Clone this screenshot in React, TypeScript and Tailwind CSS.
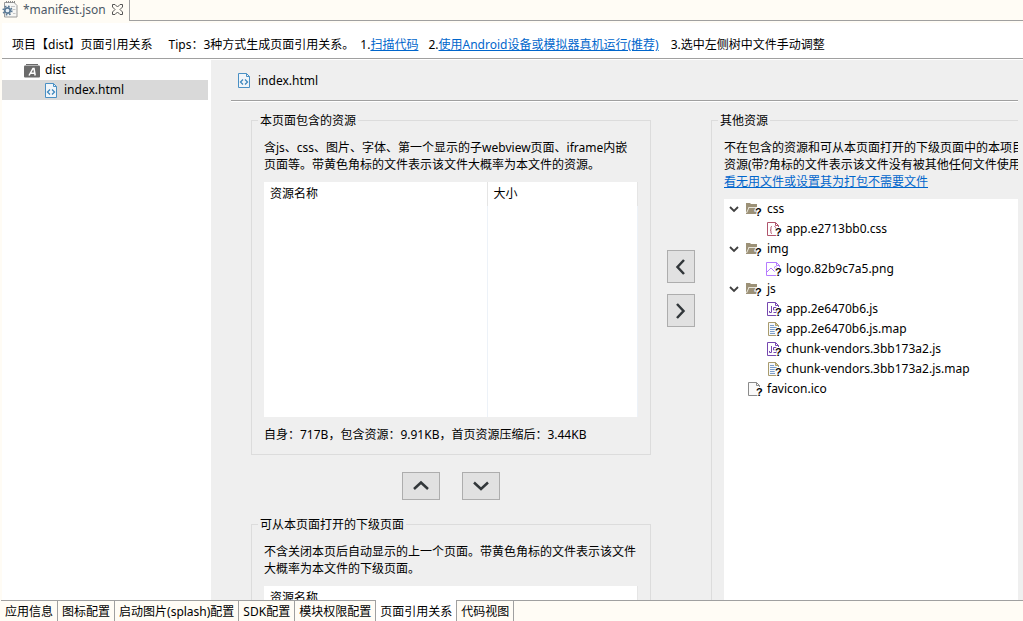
import React from "react";

type FileKind = "css" | "image" | "js" | "map" | "blank";

function Unknown({ x = 8, y = 15 }: { x?: number; y?: number }) {
  return (
    <text
      x={x}
      y={y}
      fontFamily="Liberation Sans, sans-serif"
      fontSize="11"
      fontWeight="700"
      fill="#000"
      stroke="#fff"
      strokeWidth="2"
      paintOrder="stroke"
    >
      ?
    </text>
  );
}

function HtmlIcon() {
  return (
    <svg width="12" height="15" viewBox="0 0 12 15" fill="none" className="shrink-0" aria-hidden="true">
      <path d="M.5.5h8l3 3v11H.5z" fill="#f1f5f9" stroke="#4a90c4" />
      <path d="M8.5.5v3h3" stroke="#4a90c4" />
      <path d="M5 6.5L2.500 9 5 11.500M7 6.500L9.500 9 7 11.500" stroke="#3f88be" strokeWidth="1.300" />
    </svg>
  );
}

function ProjectIcon() {
  return (
    <svg width="16" height="15" viewBox="0 0 16 15" className="shrink-0" aria-hidden="true">
      <path d="M2 1.5h12" stroke="#6b6b6b" />
      <rect x="0" y="2.5" width="16" height="12" rx="1" fill="#6b6b6b" />
      <path d="M5 12.5L9 5.5h1l1.2 7M6.8 10.2h4" stroke="#fff" strokeWidth="1.5" fill="none" />
    </svg>
  );
}

function ManifestIcon() {
  return (
    <svg width="16" height="17" viewBox="0 0 16 17" fill="none" className="shrink-0" aria-hidden="true">
      <path d="M2.500 1.500h9.500l3 3v11.500h-12.500z" fill="#f7f7f5" stroke="#9b9b9b" />
      <path d="M4.500 0v2M6.500 0v2M8.500 0v2M10.500 0v2M12.500 0v2" stroke="#8b8b8b" />
      <path d="M9 5.500h4M11 8.500h2.500M11 12.500h2.500" stroke="#c5c5c5" />
      <circle cx="5.500" cy="9.500" r="4.300" stroke="#5c7b97" strokeWidth="1.600" strokeDasharray="1.700 1.677" />
      <circle cx="5.500" cy="9.500" r="2.700" fill="#e8f0f7" stroke="#5c7b97" strokeWidth="1.700" />
    </svg>
  );
}

function CloseIcon() {
  return (
    <svg width="11" height="11" viewBox="0 0 11 11" fill="none" aria-hidden="true">
      <path
        d="M.5.5h2.500L5.500 3 8 .5h2.500V3L8 5.500 10.500 8v2.500H8L5.500 8 3 10.500H.5V8L3 5.500.5 3z"
        stroke="#555"
      />
    </svg>
  );
}

function FolderIcon() {
  return (
    <svg width="18" height="16" viewBox="0 0 18 16" className="shrink-0" aria-hidden="true">
      <path d="M0 2h4l1 1h6v3H3L1 13H0z" fill="#9c9177" />
      <path d="M2.500 7H11v6H0z" fill="#9c9177" />
      <path d="M2.500 6.500H11M.5 12L3 6.500" stroke="#e9e5da" />
      <path d="M12.500 6v3" stroke="#d5d0c2" />
      <Unknown x={9} y={15} />
    </svg>
  );
}

function FileIcon({ kind }: { kind: FileKind }) {
  const page = "M1.500 1.500h8l3 3v10h-11z";
  const fold = "M9.500 1.500v3h3";
  return (
    <svg width="16" height="16" viewBox="0 0 16 16" fill="none" className="shrink-0" aria-hidden="true">
      {kind === "css" && (
        <>
          <path d={page} fill="#fff" stroke="#b0546c" />
          <path d={fold} stroke="#b0546c" />
          <path d="M6 5.500c-1.500 0-1 1.500-1 2.500s-.5 1-1 1c.5 0 1 .3 1 1s-.5 2.500 1 2.500M8.500 5.500c1.500 0 1 1.500 1 2.500s.5 1 1 1" stroke="#b0546c" />
        </>
      )}
      {kind === "image" && (
        <>
          <path d="M.5 1.500h10l3 3v10H.5z" fill="#fff" stroke="#b57bff" />
          <path d="M10.500 1.500v3h3" stroke="#b57bff" />
          <path d="M1 11l4-4 4 4" stroke="#b57bff" />
          <circle cx="9.500" cy="6.500" r="1" stroke="#b57bff" />
        </>
      )}
      {kind === "js" && (
        <>
          <path d={page} fill="#fff" stroke="#7647b0" />
          <path d={fold} stroke="#7647b0" />
          <path d="M5.500 5v6.500h-2V10M10.500 6.500h-3v2.500h3v2.500h-3" stroke="#7647b0" />
        </>
      )}
      {kind === "map" && (
        <>
          <path d="M2.500 1.500h7l3 3v10h-10z" fill="#f5f8fc" stroke="#a99b6c" />
          <path d="M9.500 1.500v3h3z" fill="#e3cf8c" stroke="#a99b6c" />
          <path d="M4 4.500h4M4 6.500h7M4 8.500h7M4 10.500h5M4 12.500h5" stroke="#7b9cc9" />
        </>
      )}
      {kind === "blank" && (
        <>
          <path d={page} fill="#fafafa" stroke="#8b8b8b" />
          <path d={fold} stroke="#8b8b8b" />
        </>
      )}
      <Unknown x={9} y={15} />
    </svg>
  );
}

function Chevron({ d, label, size }: { d: string; label: string; size: string }) {
  return (
    <button
      type="button"
      aria-label={label}
      className={`flex items-center justify-center border border-[#adadad] bg-[#e1e1e1] ${size}`}
    >
      <svg width="16" height="16" viewBox="0 0 16 16" fill="none" aria-hidden="true">
        <path d={d} stroke="#32373a" strokeWidth="2.5" />
      </svg>
    </button>
  );
}

function Group({
  title,
  className,
  children,
}: {
  title: string;
  className: string;
  children: React.ReactNode;
}) {
  return (
    <fieldset className={`min-w-0 border-[#dcdcdc] pl-3 ${className}`}>
      <legend className="-ml-1.5 px-0.5">{title}</legend>
      {children}
    </fieldset>
  );
}

function ResourceTable({ columns }: { columns: string[] }) {
  return (
    <table className="mt-[9px] h-[235px] w-full table-fixed border-collapse bg-white text-left">
      <thead>
        <tr className="h-6">
          {columns.map((column) => (
            <th
              key={column}
              className="border-r border-[#e5e5e5] pb-0.5 pl-1.5 font-normal not-only:first:w-[223px]"
            >
              {column}
            </th>
          ))}
        </tr>
      </thead>
      <tbody>
        <tr>
          {columns.map((column) => (
            <td key={column} className="border-r border-[#edf2f8]" />
          ))}
        </tr>
      </tbody>
    </table>
  );
}

const folders: { name: string; files: { name: string; kind: FileKind }[] }[] = [
  { name: "css", files: [{ name: "app.e2713bb0.css", kind: "css" }] },
  { name: "img", files: [{ name: "logo.82b9c7a5.png", kind: "image" }] },
  {
    name: "js",
    files: [
      { name: "app.2e6470b6.js", kind: "js" },
      { name: "app.2e6470b6.js.map", kind: "map" },
      { name: "chunk-vendors.3bb173a2.js", kind: "js" },
      { name: "chunk-vendors.3bb173a2.js.map", kind: "map" },
    ],
  },
];

function ResourceTree() {
  return (
    <ul className="mt-[9px] flex-1 bg-white">
      {folders.map((folder) => (
        <li key={folder.name}>
          <div className="flex h-5 items-center pl-[5px]">
            <svg width="10" height="8" viewBox="0 0 10 8" fill="none" className="mr-[7px] shrink-0" aria-hidden="true">
              <path d="M1 2l4 4 4-4" stroke="#404040" strokeWidth="1.800" />
            </svg>
            <FolderIcon />
            <span className="ml-[3px] pb-0.5">{folder.name}</span>
          </div>
          <ul>
            {folder.files.map((file) => (
              <li key={file.name} className="flex h-5 items-center gap-1 pl-[42px]">
                <FileIcon kind={file.kind} />
                <span className="pb-0.5">{file.name}</span>
              </li>
            ))}
          </ul>
        </li>
      ))}
      <li className="flex h-5 items-center gap-1 pl-[23px]">
        <FileIcon kind="blank" />
        <span className="pb-0.5">favicon.ico</span>
      </li>
    </ul>
  );
}

const views = [
  "应用信息",
  "图标配置",
  "启动图片(splash)配置",
  "SDK配置",
  "模块权限配置",
  "页面引用关系",
  "代码视图",
];
const activeView = "页面引用关系";

export default function App() {
  return (
    <div className="flex h-screen flex-col overflow-hidden bg-[#fffcf5] font-['Noto_Sans','Noto_Sans_CJK_SC',sans-serif] text-[12px] leading-[17px] text-black">
      <div className="flex h-[21px] shrink-0">
        <div className="flex items-center border-r border-[#a0a0a0] pr-1.5 pb-0.5 pl-0.5 text-[#4c5866]">
          <ManifestIcon />
          <span className="mr-1.5 ml-[5px]">*manifest.json</span>
          <button type="button" aria-label="Close">
            <CloseIcon />
          </button>
        </div>
        <div className="flex-1 border-b border-[#a0a0a0]" />
      </div>

      <main className="mt-0.5 ml-0.5 flex min-h-0 flex-1 flex-col bg-white">
        <header className="flex h-9 shrink-0 items-center border-b border-[#a0a0a0] pt-2 pl-2.5 whitespace-nowrap">
          <h1 className="mr-4">项目【dist】页面引用关系</h1>
          <p className="flex">
            <span>Tips：3种方式生成页面引用关系。</span>
            <span className="ml-1.5">
              1.
              <a href="#scan" className="text-[#0066cc] underline">扫描代码</a>
            </span>
            <span className="ml-2.5">
              2.
              <a href="#device" className="text-[#0066cc] underline">使用Android设备或模拟器真机运行(推荐)</a>
            </span>
            <span className="ml-3">3.选中左侧树中文件手动调整</span>
          </p>
        </header>

        <div className="mt-px flex min-h-0 flex-1">
          <nav className="w-[209px] shrink-0 pr-[3px]">
            <div className="flex h-5 items-center gap-[5px] pl-[22px]">
              <ProjectIcon />
              <span className="pb-0.5">dist</span>
            </div>
            <div className="flex h-5 items-center gap-[7px] bg-[#d9d9d9] pl-[43px]">
              <HtmlIcon />
              <span className="pb-0.5">index.html</span>
            </div>
          </nav>

          <section className="flex min-w-0 flex-1 flex-col overflow-hidden bg-[#efefef] pr-[5px] pl-5">
            <h2 className="flex h-[41px] shrink-0 items-center gap-2 border-b border-[#a0a0a0] pl-[7px]">
              <HtmlIcon />
              index.html
            </h2>
            <div className="flex min-h-0 flex-1 gap-4 overflow-hidden border-t border-white pt-2.5 pl-5">
              <div className="w-[400px] shrink-0">
                <Group title="本页面包含的资源" className="border pr-3 pb-[11px]">
                  <p className="mt-2.5">
                    含js、css、图片、字体、第一个显示的子webview页面、iframe内嵌页面等。带黄色角标的文件表示该文件大概率为本文件的资源。
                  </p>
                  <ResourceTable columns={["资源名称", "大小"]} />
                  <p className="mt-[9px]">自身：717B，包含资源：9.91KB，首页资源压缩后：3.44KB</p>
                </Group>
                <div className="mt-[17px] mb-4 flex justify-center gap-[22px]">
                  <Chevron label="上移" size="h-7 w-[38px]" d="M1 11l7-6.500L15 11" />
                  <Chevron label="下移" size="h-7 w-[38px]" d="M1 4.500L8 11l7-6.500" />
                </div>
                <Group title="可从本页面打开的下级页面" className="border pr-3 pb-[11px]">
                  <p className="mt-2.5">
                    不含关闭本页后自动显示的上一个页面。带黄色角标的文件表示该文件大概率为本文件的下级页面。
                  </p>
                  <ResourceTable columns={["资源名称"]} />
                </Group>
              </div>

              <div className="flex shrink-0 flex-col gap-[11px] pt-[138px]">
                <Chevron label="移入" size="h-[33px] w-7" d="M11 1L4.500 8l6.500 7" />
                <Chevron label="移出" size="h-[33px] w-7" d="M4 1l6.500 7L4 15" />
              </div>

              <Group title="其他资源" className="flex flex-1 flex-col overflow-hidden border-t border-l">
                <p className="mt-2.5 whitespace-nowrap">
                  不在包含的资源和可从本页面打开的下级页面中的本项目
                  <br />
                  资源(带?角标的文件表示该文件没有被其他任何文件使用
                  <br />
                  <a href="#unused" className="text-[#0066cc] underline">看无用文件或设置其为打包不需要文件</a>
                </p>
                <ResourceTree />
              </Group>
            </div>
          </section>
        </div>
      </main>

      <div role="tablist" className="flex h-[21px] shrink-0 pl-px">
        {views.map((view) => (
          <button
            key={view}
            type="button"
            role="tab"
            aria-selected={view === activeView}
            className={
              view === activeView
                ? "border-r border-[#a0a0a0] bg-white px-1 pt-px"
                : "border-t border-r border-[#a0a0a0] px-1"
            }
          >
            {view}
          </button>
        ))}
        <div className="flex-1 border-t border-[#a0a0a0]" />
      </div>
    </div>
  );
}
